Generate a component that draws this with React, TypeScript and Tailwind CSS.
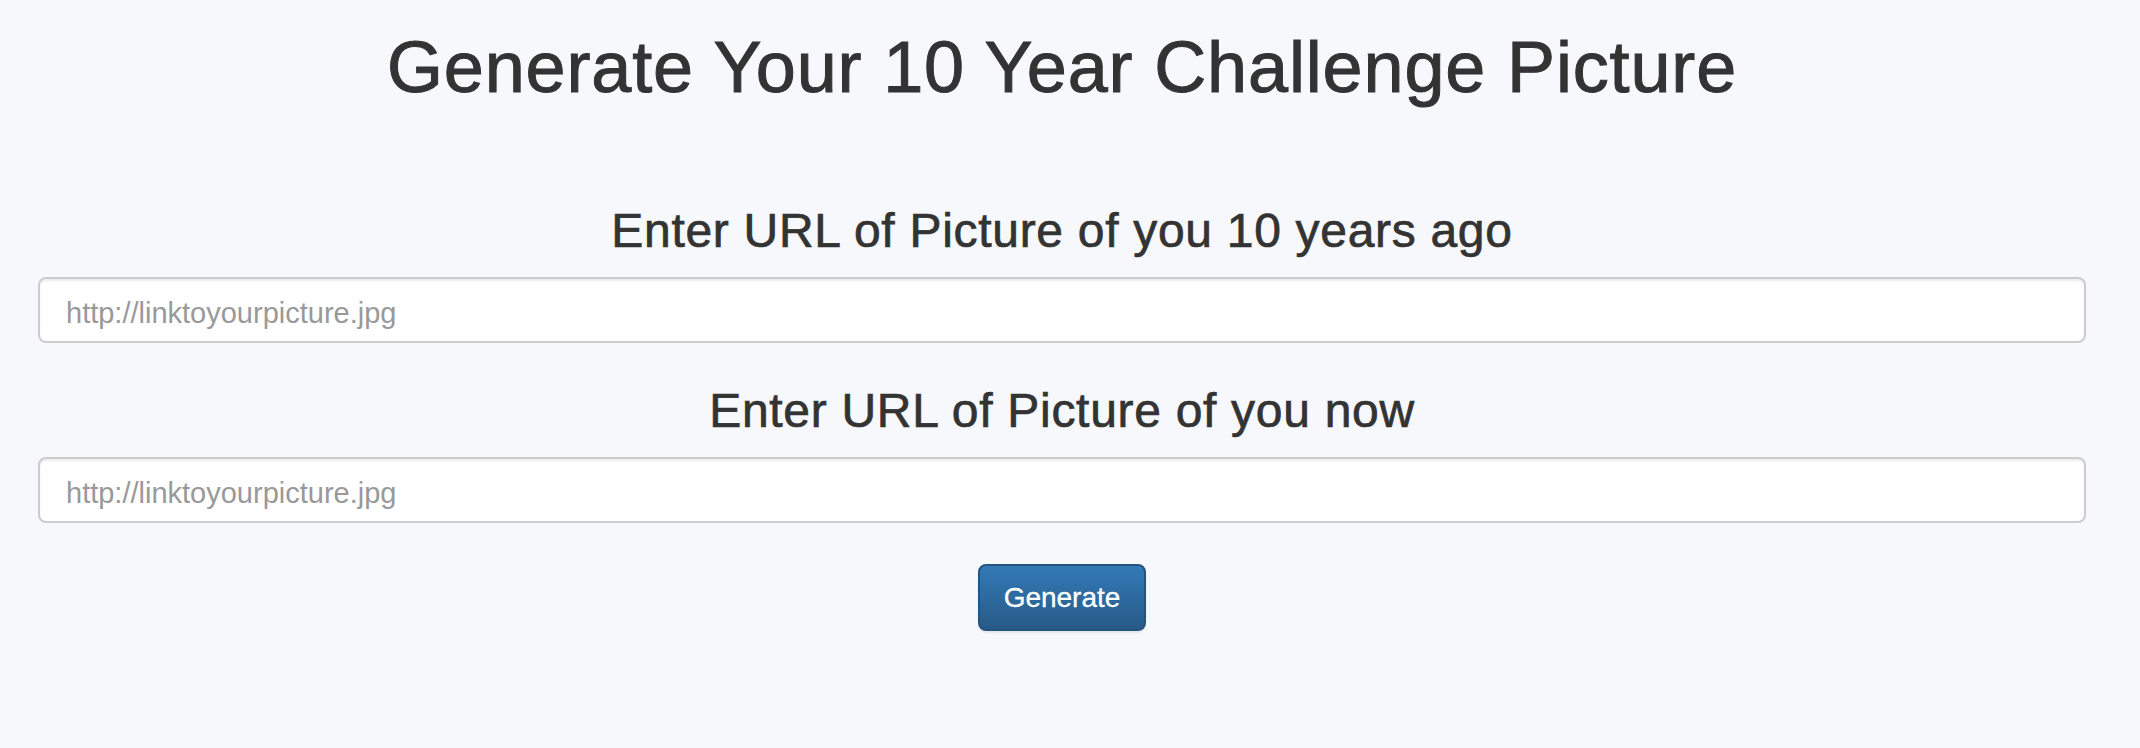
import React from 'react';

const UrlField = ({ label }: { label: string }) => (
  <div>
    <h3 className="text-center text-[48px] leading-[53px] font-medium tracking-[0.7px] text-[#333] [-webkit-text-stroke:0.7px_#333]">
      {label}
    </h3>
    <input
      type="text"
      placeholder="http://linktoyourpicture.jpg"
      className="mt-[20px] block w-full h-[66px] px-[26px] pt-[6px] bg-white border-2 border-[#ccc] rounded-[8px] shadow-[inset_0_2px_2px_rgba(0,0,0,0.075)] text-[29px] text-[#555] placeholder:text-[#999] outline-none"
    />
  </div>
);

export default function App() {
  return (
    <div className="min-h-screen bg-[#f7f8fc] font-['Liberation_Sans',Arial,sans-serif]">
      <div className="w-[2124px] px-[38px] pt-[27px]">
        <h1 className="text-center text-[72px] leading-[80px] font-medium tracking-[0.85px] text-[#333] [-webkit-text-stroke:1px_#333]">
          Generate Your 10 Year Challenge Picture
        </h1>

        <div className="mt-[97px] flex flex-col gap-[41px]">
          <UrlField label="Enter URL of Picture of you 10 years ago" />
          <UrlField label="Enter URL of Picture of you now" />
        </div>

        <div className="mt-[41px] flex justify-center">
          <button className="h-[67px] px-[24px] border-2 border-[#245580] rounded-[8px] bg-gradient-to-b from-[#337ab7] to-[#265a88] text-white text-[28px] [-webkit-text-stroke:0.3px_#fff] shadow-[0_2px_2px_rgba(0,0,0,0.075)]">
            Generate
          </button>
        </div>
      </div>
    </div>
  );
}
